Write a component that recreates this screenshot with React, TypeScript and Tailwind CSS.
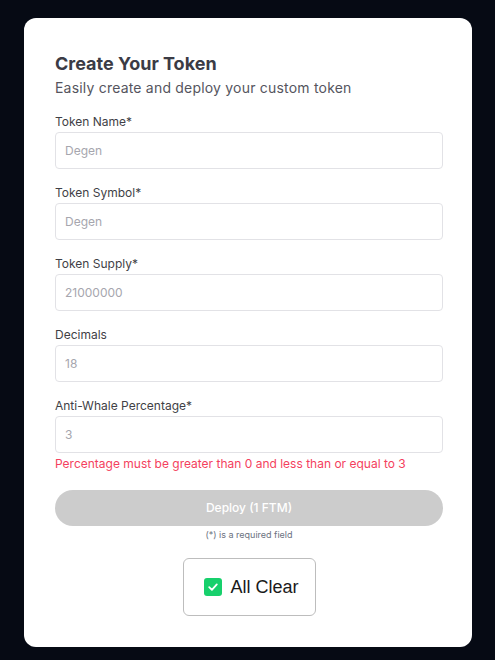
const fields = [
  { label: "Token Name*", placeholder: "Degen" },
  { label: "Token Symbol*", placeholder: "Degen" },
  { label: "Token Supply*", placeholder: "21000000" },
  { label: "Decimals", placeholder: "18" },
  { label: "Anti-Whale Percentage*", placeholder: "3" },
];

export default function App() {
  return (
    <div className="min-h-screen w-full bg-[#060a14] pt-[18px] pl-[24px] font-['Inter',sans-serif]">
      <div className="w-[448px] h-[629px] rounded-[12px] bg-white px-[31px] pt-[33px]">
        <h1 className="text-[18px] leading-[26px] font-bold text-[#3b3b45]">Create Your Token</h1>
        <p className="text-[14px] leading-[21px] tracking-[0.2px] text-[#55555e]">
          Easily create and deploy your custom token
        </p>

        <div className="mt-[15px] flex flex-col gap-[15px]">
          {fields.map((f, i) => (
            <div key={f.label}>
              <label className="block text-[12px] leading-[18px] text-[#3f3f46]">{f.label}</label>
              <input
                readOnly
                placeholder={f.placeholder}
                className="mt-[1px] block w-[388px] h-[37px] rounded-[4px] border border-[#e2e2e6] bg-white px-[9px] text-[12px] text-[#3f3f46] placeholder:text-[#a6a6ae] outline-none"
              />
              {i === fields.length - 1 && (
                <p className="mt-[2px] text-[12px] leading-[18px] text-[#f43f5e]">
                  Percentage must be greater than 0 and less than or equal to 3
                </p>
              )}
            </div>
          ))}
        </div>

        <button className="mt-[17px] block w-[388px] h-[36px] rounded-full bg-[#cccccc] text-[12px] font-medium text-white">
          Deploy (1 FTM)
        </button>
        <p className="mt-[2px] w-[388px] text-center text-[9px] leading-[14px] text-[#6b7280]">
          (*) is a required field
        </p>

        <div className="mt-[16px] flex w-[388px] justify-center">
          <div className="flex h-[58px] w-[133px] items-center gap-[9px] rounded-[6px] border border-[#bdbdbd] pl-[20px] font-['Liberation_Sans',sans-serif]">
            <span className="flex h-[18px] w-[18px] items-center justify-center rounded-[3px] bg-[#17d06c]">
              <svg width="12" height="12" viewBox="0 0 12 12" fill="none">
                <path d="M2.2 6.2 L4.9 8.8 L9.8 3.4" stroke="white" strokeWidth="1.8" strokeLinecap="round" strokeLinejoin="round" />
              </svg>
            </span>
            <span className="text-[18px] text-[#1a1a1a]">All Clear</span>
          </div>
        </div>
      </div>
    </div>
  );
}
